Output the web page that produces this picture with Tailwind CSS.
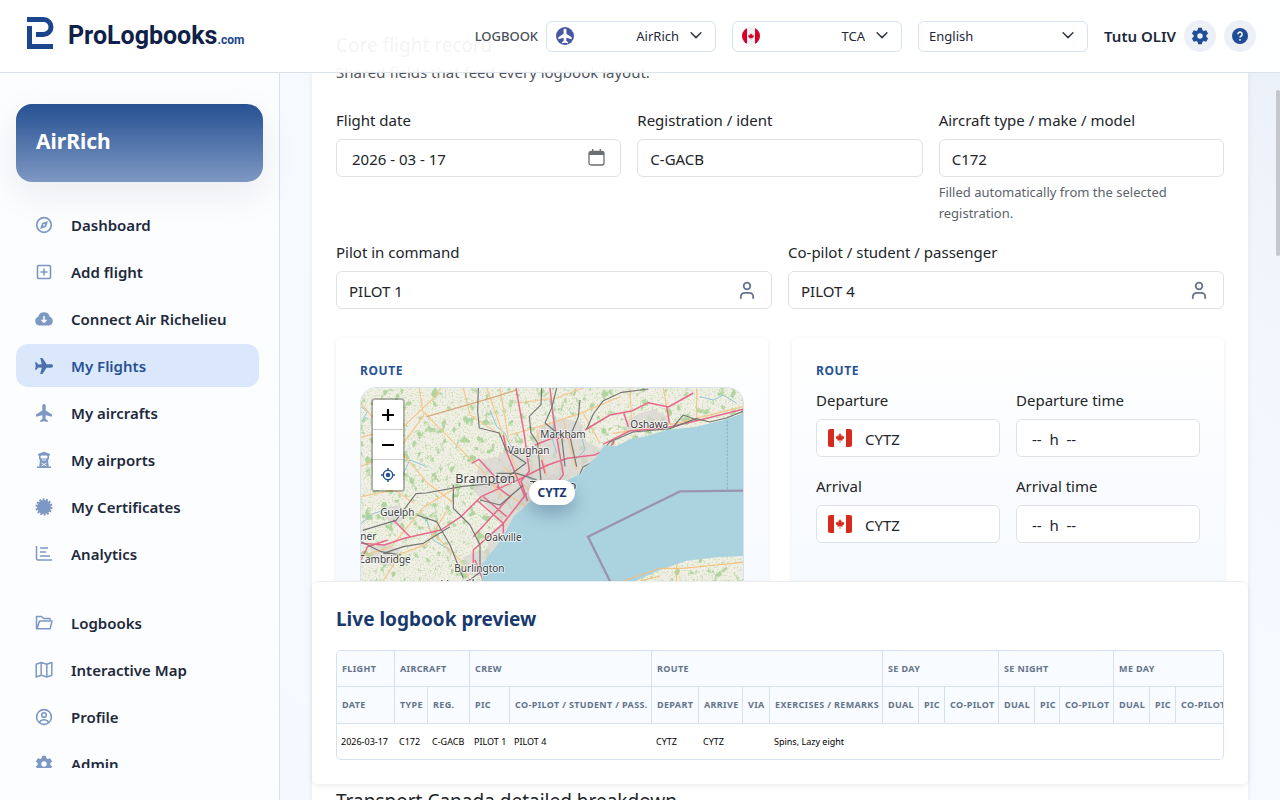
<!DOCTYPE html>
<html lang="en">
<head>
<meta charset="utf-8">
<meta name="viewport" content="width=device-width, initial-scale=1">
<title>ProLogbooks – My Flights</title>
<script src="https://cdn.jsdelivr.net/npm/@tailwindcss/browser@4"></script>
</head>
<body class="relative h-screen overflow-hidden bg-[linear-gradient(to_bottom_left,#e9f0f8,#f3f6fd_22%,#f6faff_45%,#f5f8fe)] font-['Noto_Sans','Open_Sans',sans-serif] text-[15px] leading-6 text-[#212529]">

<svg class="hidden" aria-hidden="true">
  <symbol id="chevron" viewBox="0 0 16 16"><path d="M1.500 5L8 11.500 14.500 5" fill="none" stroke="#343a40" stroke-width="2" stroke-linecap="round" stroke-linejoin="round"/></symbol>
  <symbol id="person" viewBox="0 0 16 18"><g fill="none" stroke="#64748b" stroke-width="1.8"><circle cx="8" cy="5" r="3.3"/><path d="M1.800 17v-1.200a4 4 0 0 1 4-4h4.400a4 4 0 0 1 4 4V17" stroke-linecap="round"/></g></symbol>
  <symbol id="plane" viewBox="0 0 16 18"><path d="M8 0c1.100 0 1.700.8 1.700 2v4.400L16 10.500v2.300l-6.300-1.600-.2 3.600 2.300 1.700V18L8 17.200 4.200 18v-1.500l2.300-1.700-.2-3.600L0 12.800v-2.300l6.300-4.100V2C6.300.8 6.900 0 8 0z"/></symbol>
  <symbol id="gear" viewBox="0 0 24 24"><path fill-rule="evenodd" d="M8.700 4.300 9.500 1h5l.8 3.300 1.700 1 3.300-1 2.500 4.300L20.400 11v2l2.400 2.400-2.500 4.300-3.300-1-1.700 1-.8 3.300h-5l-.8-3.300-1.700-1-3.300 1-2.500-4.300L3.600 13v-2L1.200 8.600l2.500-4.300 3.300 1zM12 8.400a3.600 3.600 0 1 0 0 7.200 3.600 3.600 0 0 0 0-7.200z"/></symbol>
  <symbol id="leaf" viewBox="0 0 20 22"><path d="M10 0l2 4 2-1-.8 5 2.600-2.400.8 1.800 3-.5-1 3.200 1.400 1L15 15l.5 2-4.800-.8V22H9.300v-5.800L4.500 17l.5-2L0 11.100l1.400-1-1-3.200 3 .5.800-1.800L6.800 8 6 3l2 1z"/></symbol>
  <symbol id="canada" viewBox="0 0 24 18"><rect width="24" height="18" rx="2" fill="#fff"/><path d="M2 0h4v18H2a2 2 0 0 1-2-2V2a2 2 0 0 1 2-2zM18 0h4a2 2 0 0 1 2 2v14a2 2 0 0 1-2 2h-4z" fill="#d52b1e"/><path d="M6 0h12M6 18h12" stroke="#e5e7eb"/><use href="#leaf" x="7.500" y="4" width="9" height="10" fill="#d52b1e"/></symbol>
</svg>

<header class="absolute inset-x-0 top-0 z-20 flex h-[73px] items-center border-b border-[#dbe2ea] bg-white/95 pl-[26px] pr-6">
  <a href="#" class="flex items-center" aria-label="ProLogbooks.com">
    <svg class="mb-1.5 h-8 w-7" viewBox="0 0 28 32" fill="none"><g stroke="#1b468d" stroke-width="5"><path d="M1 2.500h16.500a7.500 7.500 0 0 1 0 15H10"/><path d="M3.500 9v20.500H27"/></g></svg>
    <span class="ml-3.5 flex items-baseline whitespace-nowrap font-['Roboto',sans-serif] font-bold text-[#0f2148]"><span class="text-[25px] leading-8">ProLogbooks</span><span class="text-xs text-[#1b468d]">.com</span></span>
  </a>
  <div class="ml-auto flex items-center gap-4">
    <div class="flex items-center gap-2">
      <label for="logbook" class="text-[13px] font-medium text-[#495057]">LOGBOOK</label>
      <div class="relative">
        <select id="logbook" class="h-[31px] w-[170px] appearance-none rounded-md border border-[#d7e2f0] bg-white pr-9 text-right text-[13px] text-[#1e293b]" style="text-align-last:right"><option>AirRich</option></select>
        <svg class="pointer-events-none absolute left-[10px] top-1.5 size-[18px]" viewBox="0 0 18 18"><circle cx="9" cy="9" r="9" fill="#4657a5"/><use href="#plane" x="2" y="1.500" width="14" height="15" fill="#fff"/></svg>
        <svg class="pointer-events-none absolute right-[14px] top-2 size-3"><use href="#chevron"/></svg>
      </div>
    </div>
    <div class="relative">
      <select aria-label="Authority" class="h-[31px] w-[170px] appearance-none rounded-md border border-[#d7e2f0] bg-white pr-9 text-right text-[13px] text-[#1e293b]" style="text-align-last:right"><option>TCA</option></select>
      <svg class="pointer-events-none absolute left-[10px] top-1.5 size-[18px] rounded-full" viewBox="0 0 18 18"><rect width="18" height="18" fill="#f1f1f1"/><path d="M0 0h5v18H0zM13 0h5v18h-5z" fill="#d80027"/><use href="#leaf" x="6" y="6" width="6" height="7" fill="#d80027"/></svg>
      <svg class="pointer-events-none absolute right-[14px] top-2 size-3"><use href="#chevron"/></svg>
    </div>
    <div class="relative">
      <select aria-label="Language" class="h-[31px] w-[170px] appearance-none rounded-md border border-[#d7e2f0] bg-white pl-2.5 text-[13px] text-[#1e293b]"><option>English</option></select>
      <svg class="pointer-events-none absolute right-[14px] top-2 size-3"><use href="#chevron"/></svg>
    </div>
    <div class="flex items-center gap-2">
      <span class="whitespace-nowrap text-[15px] font-semibold text-[#1e293b]">Tutu OLIV</span>
      <button class="flex size-8 items-center justify-center rounded-full bg-[#edf1f7]" aria-label="Settings"><svg class="size-[18px] fill-[#1f4e96]"><use href="#gear"/></svg></button>
      <button class="flex size-8 items-center justify-center rounded-full bg-[#edf1f7]" aria-label="Help"><svg class="size-4" viewBox="0 0 16 16"><circle cx="8" cy="8" r="8" fill="#1f4e96"/><path d="M5.900 6.200a2.100 2.100 0 1 1 3.200 1.800C8.300 8.500 8 8.800 8 9.600" fill="none" stroke="#fff" stroke-width="1.500"/><circle cx="8" cy="11.800" r=".9" fill="#fff"/></svg></button>
    </div>
  </div>
</header>

<div class="flex h-full">
  <aside class="relative z-10 flex w-[280px] shrink-0 flex-col border-r border-[#d7e2f0] bg-[#fcfdff] px-4 pb-8 pt-[104px]">
    <div class="h-[78px] shrink-0 rounded-2xl bg-linear-to-b from-[#265193] to-[#7e98c2] px-5 pt-[23px] text-[21px] font-bold leading-7 text-white shadow-[0_12px_36px_rgba(15,23,42,0.08)]">AirRich</div>
    <nav class="mr-1 mt-[21px] flex min-h-0 flex-col gap-1 overflow-hidden font-semibold text-[#1e293b] *:flex *:h-[43px] *:shrink-0 *:items-center *:gap-[18px] *:rounded-xl *:pl-[19px] [&_svg]:size-[18px] [&_svg]:text-[#7e98c4] [&_svg]:shrink-0">
      <a href="#"><svg viewBox="0 0 18 18" fill="none" stroke="currentColor" stroke-width="1.700"><circle cx="9" cy="9" r="7.300"/><path d="M13 5l-2 6-6 2 2-6z" fill="currentColor" stroke="none"/><circle cx="9" cy="9" r=".9" fill="#fff" stroke="none"/></svg>Dashboard</a>
      <a href="#"><svg viewBox="0 0 18 18" fill="none" stroke="currentColor" stroke-width="1.600"><rect x="2.500" y="2.500" width="13" height="13" rx="1"/><path d="M9 5.500v7M5.500 9h7"/></svg>Add flight</a>
      <a href="#"><svg viewBox="0 0 18 18"><path d="M4.500 15.500a4.500 4.500 0 0 1-1.300-8.700 6 6 0 0 1 11.600 0 4.500 4.500 0 0 1-1.300 8.700z" fill="currentColor"/><path d="M9 6v6M6.500 9.800L9 12.300l2.500-2.500" fill="none" stroke="#fff" stroke-width="1.500"/></svg>Connect Air Richelieu</a>
      <a href="#" aria-current="page" class="bg-[#dbe8fc] text-[#265193]"><svg class="rotate-90 fill-[#4a70ad]"><use href="#plane"/></svg>My Flights</a>
      <a href="#"><svg fill="currentColor"><use href="#plane"/></svg>My aircrafts</a>
      <a href="#"><svg viewBox="0 0 18 18"><path d="M9 .8l6 2.200v1.500h-1v4h-1l.7 7H16V17H2v-1.500h2.300l.7-7H4v-4H3V3z" fill="currentColor"/><path d="M6 5h6v2H6zM7 9h4M6.500 15l5-3M11.500 15l-5-3" stroke="#fff" fill="#fff" stroke-width=".9"/></svg>My airports</a>
      <a href="#"><svg viewBox="0 0 18 18"><circle cx="9" cy="9" r="7" fill="currentColor"/><circle cx="9" cy="9" r="7.500" fill="none" stroke="currentColor" stroke-width="2" stroke-dasharray="2 1.366"/></svg>My Certificates</a>
      <a href="#"><svg viewBox="0 0 18 18" fill="none" stroke="currentColor" stroke-width="1.500"><path d="M1.500 1v12.500a1.500 1.500 0 0 0 1.500 1.500h14M5 3h8M5 7h6M5 11h10"/></svg>Analytics</a>
      <a href="#" class="mt-[22px]"><svg viewBox="0 0 18 18" fill="none" stroke="currentColor" stroke-width="1.500" stroke-linejoin="round"><path d="M15 6V4.500H8.500L6.500 2.500h-5v12.200h13.700L17 7H4.500L2 14.700"/></svg>Logbooks</a>
      <a href="#"><svg viewBox="0 0 18 18" fill="none" stroke="currentColor" stroke-width="1.500" stroke-linejoin="round"><path d="M1.200 3.300L6.200 1.500l5.600 1.800 5-1.800v12.700l-5 1.800-5.600-1.800-5 1.800zM6.200 1.500v12.700M11.800 3.300V16"/></svg>Interactive Map</a>
      <a href="#"><svg viewBox="0 0 18 18" fill="none" stroke="currentColor" stroke-width="1.600"><circle cx="9" cy="9" r="7.400"/><circle cx="9" cy="7" r="2.300"/><path d="M4.300 14.500a5.400 5.400 0 0 1 9.400 0"/></svg>Profile</a>
      <a href="#"><svg fill="currentColor"><use href="#gear"/></svg>Admin</a>
    </nav>
  </aside>

  <main class="relative min-w-0 flex-1 overflow-hidden px-8">
    <section class="h-[900px] bg-white px-6 pt-[33px] shadow-[0_2px_6px_rgba(15,23,42,0.07)] [&_label]:mb-[7px] [&_label]:block [&_label]:pt-px">
      <h2 class="text-[19px] leading-6">Core flight record</h2>
      <p class="mt-[3px] text-[#50565c]">Shared fields that feed every logbook layout.</p>

      <div class="mt-[23px] grid grid-cols-3 gap-4">
        <div>
          <label for="date">Flight date</label>
          <div class="relative">
            <input id="date" value="2026 - 03 - 17" class="h-[38px] w-full rounded-md border border-[#dee2e6] bg-white px-[15px] pt-0.5">
            <button class="absolute right-4 top-2.5" aria-label="Open calendar"><svg class="size-[17px]" viewBox="0 0 17 17"><rect x="1" y="2.500" width="15" height="13.500" rx="2" fill="none" stroke="#6b6e72" stroke-width="1.300"/><path d="M1 6V4a2 2 0 0 1 2-2h1V0h1.400v2h6.200V0H13v2h1a2 2 0 0 1 2 2v2z" fill="#6b6e72"/></svg></button>
          </div>
        </div>
        <div>
          <label for="reg">Registration / ident</label>
          <input id="reg" value="C-GACB" class="h-[38px] w-full rounded-md border border-[#dee2e6] bg-white px-3 pt-0.5">
        </div>
        <div>
          <label for="type">Aircraft type / make / model</label>
          <input id="type" value="C172" class="h-[38px] w-full rounded-md border border-[#dee2e6] bg-white px-3 pt-0.5">
          <p class="mt-[5px] text-[13px] leading-[21px] text-[#5c636a]">Filled automatically from the selected registration.</p>
        </div>
      </div>

      <div class="mt-[15px] grid grid-cols-2 gap-4">
        <div>
          <label for="pic">Pilot in command</label>
          <div class="relative">
            <input id="pic" value="PILOT 1" class="h-[38px] w-full rounded-md border border-[#dee2e6] bg-white px-3 pt-0.5">
            <svg class="pointer-events-none absolute right-[17px] top-2.5 h-[18px] w-4"><use href="#person"/></svg>
          </div>
        </div>
        <div>
          <label for="cop">Co-pilot / student / passenger</label>
          <div class="relative">
            <input id="cop" value="PILOT 4" class="h-[38px] w-full rounded-md border border-[#dee2e6] bg-white px-3 pt-0.5">
            <svg class="pointer-events-none absolute right-[17px] top-2.5 h-[18px] w-4"><use href="#person"/></svg>
          </div>
        </div>
      </div>

      <div class="mt-[29px] grid grid-cols-2 gap-6">
        <div class="rounded-md bg-linear-to-b from-white to-[#f3f7fe] to-80% p-6 shadow-[0_1px_4px_rgba(15,23,42,0.08)]">
          <h3 class="mb-2 text-xs font-bold leading-[17px] tracking-wider text-[#265193]">ROUTE</h3>
          <div class="relative h-[346px] overflow-hidden rounded-2xl border border-[#d7e2f0]">
            <svg class="size-full" viewBox="33 114 1146 1032" preserveAspectRatio="xMinYMin slice" font-family="'Noto Sans',sans-serif">
              <defs>
                <filter id="woods" x="0" y="0" width="100%" height="100%" color-interpolation-filters="sRGB"><feTurbulence type="fractalNoise" baseFrequency=".045 .035" numOctaves="5" seed="11"/><feColorMatrix values="0 0 0 0 .69  0 0 0 0 .83  0 0 0 0 .62  8 0 0 0 -4.800"/></filter>
                <filter id="scrub" x="0" y="0" width="100%" height="100%" color-interpolation-filters="sRGB"><feTurbulence type="fractalNoise" baseFrequency=".2" numOctaves="3" seed="5"/><feColorMatrix values="0 0 0 0 .8  0 0 0 0 .89  0 0 0 0 .72  7 0 0 0 -3.900"/></filter>
              </defs>
              <rect x="33" y="114" width="1146" height="1032" fill="#f1eee6"/>
              <rect x="33" y="114" width="1146" height="1032" filter="url(#scrub)"/>
              <rect x="33" y="114" width="1146" height="1032" filter="url(#woods)"/>
              <g fill="#d9d6d2" opacity=".75">
                <path d="M570 230l60-25 60 10 20 60 40 20-10 30-60 50-50 20-110 10-60-20-20-60 40-40 60 10z"/>
                <path d="M390 330l50-10 40 40 60 20 20 60-40 50-50 40-50-50-50-60 10-50z"/>
                <path d="M870 190l40-12 40 20 5 25-60 15-70 8 5-35z"/>
                <path d="M110 470l40-5 15 40-30 20-30-20zM60 590l50-10 40 20-20 50-60-10zM340 620l60-20 30 30-20 50-60-5z"/>
                <path d="M430 540l60-40 10 40-60 90-40-10z"/>
              </g>
              <g fill="none" stroke="#8fc7d8" stroke-width="3">
                <path d="M33 170l20 15-10 15 12 8M420 180l20 50 25 20 15 35 30 30M600 150l15 60-10 50 15 50M1050 140l40 10 30-15 40 25M33 520l40-30 30-10 30 20M200 490l30 20 20 60 50 30M500 370l40 10 20 30M160 370l20-40 50 20M690 240l15 60-30 30"/>
              </g>
              <g fill="none" stroke="#f6c68a" stroke-width="3.500">
                <path d="M208 114l10 70 180 180 60 80M33 262l130-35 90-85 20-28M340 114l20 80 120 80M33 350l120-60 70-96M410 114l60 170 40 100M450 114l25 150M33 160l200 240 80 60M33 620l90-30 100-120 100-60M100 693l50-80 80-30 60-100M230 530l100 100 30 63M480 255l120-35 90-30 120-50M560 240l30 140M640 210l40 150M700 190l50 90M840 114l5 110M1040 114v90M940 114l20 110M1179 170l-200 50-190 30M420 400l110 70-60 90M460 350l90 80M33 440l100-20 60 40M700 114l-80 30-120 15"/>
              </g>
              <path d="M230 200l190-55 80-25" fill="none" stroke="#d8a878" stroke-width="3.500"/>
              <g fill="none" stroke="#e66b8b" stroke-width="4.500" stroke-linejoin="round">
                <path d="M498 114l25 140 15 110 -25 30 20 60M600 114l10 90 30 170-15 20M365 340l22-12 50 55 10 30M33 580l70 5 60-20 110-25 60-40 60-60 110-50 90-45 60-20 80-10 45-20 15-22"/>
                <path d="M1179 178l-120 30-110 25-110 10-80 40M705 240l75-45 65-12 50-25 60 13 75-42M820 185l15 45M950 170l8 50M460 255l10 50 30 75 25 60M575 330l10 40M555 285l50-20 60 0M370 640v-40l90-80 70-90M380 450l80 70v30M400 440l70 60M130 510l50 50M33 630l20-40 60-20M375 630l25 63M440 410l40 30-110 120"/>
              </g>
              <g fill="none" stroke="#757575" stroke-width="3.500" stroke-linejoin="round">
                <path d="M1179 184l-50 20-50 12-40-10-80 30-110 10-70 30-20 25-20 30-40 20-15 35-50 20-60 20-50 50-60 80-60 100-40 30-70 35"/>
                <path d="M385 114l-2 70 5 50 60 15 20 50 60 40-80 60-110 10-110 20-30 2-60 80-100 30M575 114l-2 50-35 35 5 50 20 30 10 115M620 114l-15 60-20 45 50 40 10 90M895 117l-80 10-55 25-30 40-20 45M690 150l-5 50-25 60 20 90M440 370l60 0 60 20M310 405v70l50 50 30 60 0 70M200 495l60 20 40 70 40 100M33 575l60 30 60 10M1040 210l-40-15-30 35M390 450l60 15 70-60M100 610l60-20 60-10 80-50"/>
              </g>
              <path d="M1180 190l-60 20-80 20-90 10-60 18-50 10-40 20-38-2-20 32-32 30-20 24-50 23-40 30-50 22-30 28-30 25-20 40-30 48-40 50L390 655l8 40 60 20h350L930 660l80-28 90-10 80-4z" fill="#abd3df"/>
              <path d="M820 693l110-38h70l179-18M980 645v50M870 693l60-15" fill="none" stroke="#f6bd72" stroke-width="3"/>
              <path d="M1132 212v210" stroke="#8699b6" stroke-width="2" stroke-dasharray="7 4"/>
              <path d="M1179 422l-189 2-276 136 69 140" fill="none" stroke="#9b93b2" stroke-width="7"/>
              <g fill="#3b3b3b" stroke="#fff" stroke-opacity=".75" stroke-width="5" paint-order="stroke" font-size="30">
                <text x="841" y="233">Oshawa</text><text x="571" y="263">Markham</text><text x="473" y="311">Vaughan</text>
                <text x="316" y="398" font-size="38">Brampton</text><text x="540" y="420" font-size="38">Toronto</text>
                <text x="91" y="498">Guelph</text><text x="403" y="573">Oakville</text><text x="-56" y="569">Kitchener</text>
                <text x="26" y="639">Cambridge</text><text x="313" y="665">Burlington</text><text x="270" y="718" font-size="38">Hamilton</text>
              </g>
            </svg>
            <div class="absolute left-2.5 top-2.5 flex flex-col divide-y divide-[#ccc] overflow-hidden rounded border-2 border-black/25 bg-clip-padding text-black *:flex *:size-[30px] *:items-center *:justify-center *:bg-white [&_svg]:size-4">
              <button aria-label="Zoom in"><svg viewBox="0 0 16 16"><path d="M8 2v12M2 8h12" stroke="#000" stroke-width="2.200"/></svg></button>
              <button aria-label="Zoom out"><svg viewBox="0 0 16 16"><path d="M2 8h12" stroke="#000" stroke-width="2.200"/></svg></button>
              <button aria-label="Locate"><svg viewBox="0 0 16 16" fill="none" stroke="#265193" stroke-width="1.500"><circle cx="8" cy="8" r="4.700"/><circle cx="8" cy="8" r="1.500" fill="#265193"/><path d="M8 1v3M8 12v3M1 8h3M12 8h3"/></svg></button>
            </div>
            <span class="absolute left-[168px] top-[92px] flex h-[25px] w-[46px] items-center justify-center rounded-full bg-white text-xs font-bold text-[#1a3a6e] shadow-[0_8px_18px_rgba(15,40,90,0.3)]">CYTZ</span>
          </div>
        </div>

        <div class="rounded-md bg-linear-to-b from-white to-[#f3f7fe] to-80% p-6 shadow-[0_1px_4px_rgba(15,23,42,0.08)]">
          <h3 class="mb-2 text-xs font-bold leading-[17px] tracking-wider text-[#265193]">ROUTE</h3>
          <div class="grid grid-cols-2 gap-4">
            <div>
              <label for="dep">Departure</label>
              <div class="relative">
                <input id="dep" value="CYTZ" class="h-[38px] w-full rounded-md border border-[#dee2e6] bg-white pl-12 pt-0.5">
                <svg class="pointer-events-none absolute left-3 top-2.5 h-[18px] w-6"><use href="#canada"/></svg>
              </div>
            </div>
            <div>
              <label for="dept">Departure time</label>
              <input id="dept" value="--  h  --" class="h-[38px] w-full whitespace-pre rounded-md border border-[#dee2e6] bg-white pl-[15px] pt-0.5">
            </div>
            <div>
              <label for="arr">Arrival</label>
              <div class="relative">
                <input id="arr" value="CYTZ" class="h-[38px] w-full rounded-md border border-[#dee2e6] bg-white pl-12 pt-0.5">
                <svg class="pointer-events-none absolute left-3 top-2.5 h-[18px] w-6"><use href="#canada"/></svg>
              </div>
            </div>
            <div>
              <label for="arrt">Arrival time</label>
              <input id="arrt" value="--  h  --" class="h-[38px] w-full whitespace-pre rounded-md border border-[#dee2e6] bg-white pl-[15px] pt-0.5">
            </div>
          </div>
        </div>
      </div>
      <h2 class="mt-8 text-[19px] leading-6">Transport Canada detailed breakdown</h2>
    </section>

    <section class="absolute inset-x-8 bottom-4 rounded-md border-t border-[#eceef1] bg-white p-6 shadow-[0_2px_5px_rgba(15,23,42,0.08)]">
      <h2 class="text-[19px] font-bold leading-[26px] text-[#1a3a6e]">Live logbook preview</h2>
      <div class="mt-[18px] overflow-hidden rounded-[5px] border border-[#d7e2f0]">
        <table class="w-[940px] table-fixed border-separate border-spacing-0 whitespace-nowrap text-left text-[9px] leading-3 text-black [&_td]:h-[35px] [&_td]:pl-1 [&_th]:h-9 [&_th]:border-b [&_th]:border-r [&_th]:border-[#d7e2f0] [&_th]:bg-[#f8fbff] [&_th]:pl-[5px] [&_th]:font-bold [&_th]:tracking-[0.04em] [&_th]:text-[#64748b]">
          <colgroup><col class="w-[58px]"><col class="w-[33px]"><col class="w-[42px]"><col class="w-[40px]"><col class="w-[142px]"><col class="w-[47px]"><col class="w-[44px]"><col class="w-[27px]"><col class="w-[113px]"><col class="w-[36px]"><col class="w-[26px]"><col class="w-[54px]"><col class="w-[36px]"><col class="w-[25px]"><col class="w-[54px]"><col class="w-[36px]"><col class="w-[26px]"><col></colgroup>
          <thead>
            <tr><th>FLIGHT</th><th colspan="2">AIRCRAFT</th><th colspan="2">CREW</th><th colspan="4">ROUTE</th><th colspan="3">SE DAY</th><th colspan="3">SE NIGHT</th><th colspan="3">ME DAY</th></tr>
            <tr class="h-[37px]"><th>DATE</th><th>TYPE</th><th>REG.</th><th>PIC</th><th>CO-PILOT / STUDENT / PASS.</th><th>DEPART</th><th>ARRIVE</th><th>VIA</th><th>EXERCISES / REMARKS</th><th>DUAL</th><th>PIC</th><th>CO-PILOT</th><th>DUAL</th><th>PIC</th><th>CO-PILOT</th><th>DUAL</th><th>PIC</th><th>CO-PILOT</th></tr>
          </thead>
          <tbody><tr><td>2026-03-17</td><td>C172</td><td>C-GACB</td><td>PILOT 1</td><td>PILOT 4</td><td>CYTZ</td><td>CYTZ</td><td></td><td>Spins, Lazy eight</td><td colspan="9"></td></tr></tbody>
        </table>
      </div>
    </section>
    <div class="absolute right-0 top-[90px] h-[166px] w-1 rounded-full bg-[#c4c7cc]"></div>
  </main>
</div>
</body>
</html>
